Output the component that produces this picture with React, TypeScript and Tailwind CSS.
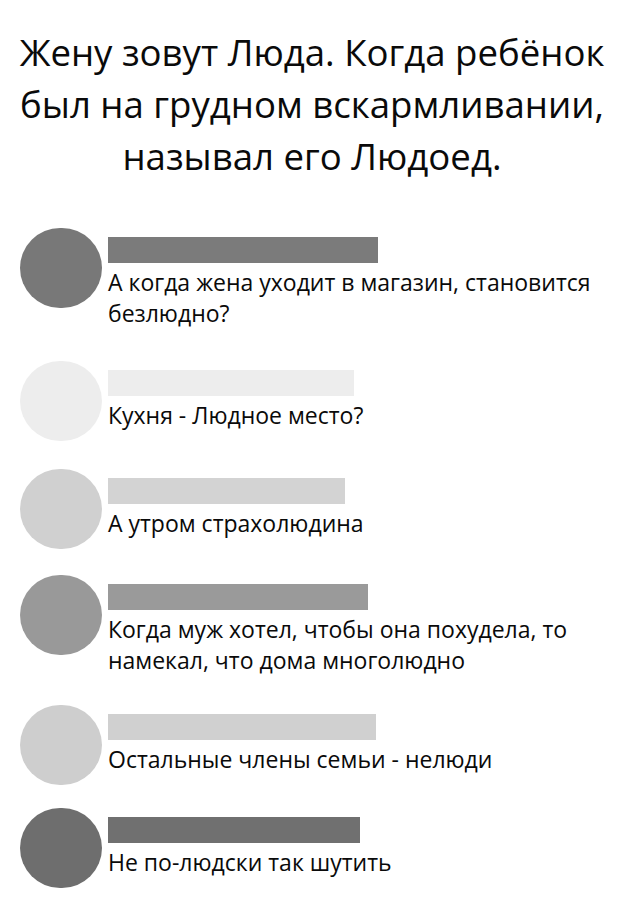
import React from "react";

type Comment = {
  avatar: string;
  bar: string;
  barWidth: string;
  gap: string;
  lines: string[];
};

const comments: Comment[] = [
  {
    avatar: "bg-[#787878]",
    bar: "bg-[#7b7b7b]",
    barWidth: "w-[270px]",
    gap: "mt-[46px]",
    lines: ["А когда жена уходит в магазин, становится", "безлюдно?"],
  },
  {
    avatar: "bg-[#ededed]",
    bar: "bg-[#ededed]",
    barWidth: "w-[246px]",
    gap: "mt-[32px]",
    lines: ["Кухня - Людное место?"],
  },
  {
    avatar: "bg-[#d0d0d0]",
    bar: "bg-[#d3d3d3]",
    barWidth: "w-[237px]",
    gap: "mt-[28px]",
    lines: ["А утром страхолюдина"],
  },
  {
    avatar: "bg-[#999999]",
    bar: "bg-[#9a9a9a]",
    barWidth: "w-[260px]",
    gap: "mt-[26px]",
    lines: ["Когда муж хотел, чтобы она похудела, то", "намекал, что дома многолюдно"],
  },
  {
    avatar: "bg-[#cecece]",
    bar: "bg-[#d0d0d0]",
    barWidth: "w-[268px]",
    gap: "mt-[29px]",
    lines: ["Остальные члены семьи - нелюди"],
  },
  {
    avatar: "bg-[#6e6e6e]",
    bar: "bg-[#707070]",
    barWidth: "w-[252px]",
    gap: "mt-[23px]",
    lines: ["Не по-людски так шутить"],
  },
];

function CommentRow({ c }: { c: Comment }) {
  return (
    <div className={`flex items-start pl-[20px] ${c.gap}`}>
      <div className={`w-[82px] h-[80px] shrink-0 rounded-full ${c.avatar}`} />
      <div className="flex flex-col pl-[6px] pt-[9px]">
        <div className={`h-[26px] ${c.barWidth} ${c.bar}`} />
        <div className="mt-[4px] text-[23px] leading-[31px] text-[#0a0a0a]">
          {c.lines.map((l) => (
            <div key={l} className="whitespace-nowrap">
              {l}
            </div>
          ))}
        </div>
      </div>
    </div>
  );
}

export default function App() {
  return (
    <div
      className="w-[640px] h-[910px] bg-white overflow-hidden"
      style={{ fontFamily: '"Open Sans", "Noto Sans", sans-serif' }}
    >
      <h1 className="pt-[26px] pr-[16px] text-center text-[36.6px] leading-[52px] font-normal text-[#0a0a0a]">
        Жену зовут Люда. Когда ребёнок
        <br />
        был на грудном вскармливании,
        <br />
        называл его Людоед.
      </h1>
      <div className="flex flex-col">
        {comments.map((c, i) => (
          <CommentRow key={i} c={c} />
        ))}
      </div>
    </div>
  );
}
